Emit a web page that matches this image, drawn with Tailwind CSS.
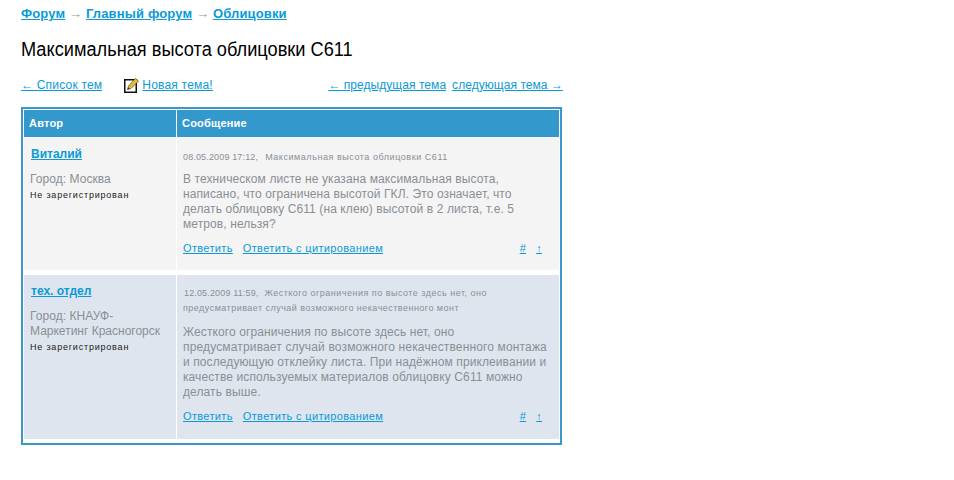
<!DOCTYPE html>
<html><head><meta charset="utf-8"><script src="https://cdn.jsdelivr.net/npm/@tailwindcss/browser@4"></script></head>
<body class="bg-white font-['Liberation_Sans',Arial,sans-serif] text-[#8a8f94]">
<div class="w-[954px] h-[480px] overflow-hidden pl-[21px]">
  <div class="pt-[6px] h-[16px] box-content text-[13px] leading-[16px] font-bold tracking-[0.15px] text-[#999] whitespace-nowrap">
    <a class="text-[#0a9ad6] underline">Форум</a> <span class="font-normal">→</span> <a class="text-[#0a9ad6] underline">Главный форум</a> <span class="font-normal">→</span> <a class="text-[#0a9ad6] underline">Облицовки</a>
  </div>
  <h1 class="mt-[15px] text-[20px] leading-[24px] font-normal text-black whitespace-nowrap origin-left scale-x-[0.91]">Максимальная высота облицовки С611</h1>
  <div class="mt-[14px] w-[542px] h-[20px] flex items-center justify-between text-[12px] text-[#0a9ad6] whitespace-nowrap">
    <div class="flex items-center tracking-[0.2px]">
      <a class="underline">← Список тем</a>
      <svg class="ml-[22px] mr-[3px]" width="15" height="16" viewBox="0 0 15 16"><rect x="0.75" y="2.75" width="11.5" height="12.5" fill="#fff" stroke="#111" stroke-width="1.5"/><path d="M3.5 12.5 L4.5 9 L11.5 1.5 L14.5 4 L7 11.5 Z" fill="#e9bb45" stroke="#6b5213" stroke-width="0.8"/><path d="M3.5 12.5 L4.5 10.5 L5.5 11.8 Z" fill="#222"/></svg>
      <a class="underline">Новая тема!</a>
    </div>
    <div class="flex gap-[6px] tracking-[0.05px]"><a class="underline">← предыдущая тема</a><a class="underline">следующая тема →</a></div>
  </div>
  <div class="mt-[12px] w-[541px] border-2 border-[#3a98cb] pt-px px-px pb-[4px] bg-white">
    <div class="grid grid-cols-[152px_1fr] gap-x-px">
      <div class="h-[27px] bg-[#3399cc] text-white font-bold text-[11px] tracking-[0.2px] leading-[27px] pl-[5px]">Автор</div>
      <div class="h-[27px] bg-[#3399cc] text-white font-bold text-[11px] tracking-[0.2px] leading-[27px] pl-[5px]">Сообщение</div>

      <div class="h-[133px] bg-[#f4f4f5] pl-[7px] pt-[10px]">
        <a class="block text-[12px] leading-[15px] font-bold text-[#0a9ad6] underline">Виталий</a>
        <div class="mt-[10px] -ml-px text-[12px] leading-[15px] tracking-[0.05px]">Город: Москва</div>
        <div class="-ml-px mt-[2px] text-[9px] leading-[12px] tracking-[0.8px] text-[#222]">Не зарегистрирован</div>
      </div>
      <div class="h-[133px] bg-[#f4f4f5] pl-[6px] pr-[6px]">
        <div class="pt-[13px] text-[9px] leading-[14px] whitespace-nowrap"><span class="tracking-[0.15px]">08.05.2009 17:12,</span><span class="ml-[7px] tracking-[0.55px]">Максимальная высота облицовки С611</span></div>
        <div class="mt-[8px] text-[12px] leading-[15px] tracking-[0.1px]">В техническом листе не указана максимальная высота,<br>написано, что ограничена высотой ГКЛ. Это означает, что<br>делать облицовку С611 (на клею) высотой в 2 листа, т.е. 5<br>метров, нельзя?</div>
        <div class="mt-[9px] flex justify-between text-[11px] leading-[14px] tracking-[0.35px] text-[#0a9ad6]">
          <div class="flex gap-[10px]"><a class="underline">Ответить</a><a class="underline">Ответить с цитированием</a></div>
          <div class="flex gap-[10px] pr-[11px]"><a class="underline">#</a><a class="underline">↑</a></div>
        </div>
      </div>

      <div class="h-[5px] col-span-2 bg-white"></div>

      <div class="h-[164px] bg-[#dfe5ef] pl-[7px] pt-[9px]">
        <a class="block text-[12px] leading-[15px] font-bold text-[#0a9ad6] underline">тех. отдел</a>
        <div class="mt-[10px] -ml-px text-[12px] leading-[15px] tracking-[0.05px] w-[145px]">Город: КНАУФ-<br><span class="tracking-normal">Маркетинг Красногорск</span></div>
        <div class="-ml-px mt-[2px] text-[9px] leading-[12px] tracking-[0.8px] text-[#222]">Не зарегистрирован</div>
      </div>
      <div class="h-[164px] bg-[#dfe5ef] pl-[7px] pr-[6px]">
        <div class="pt-[11px] text-[9px] leading-[15px] whitespace-nowrap"><span class="tracking-[0.15px]">12.05.2009 11:59,</span><span class="ml-[6px] tracking-[0.5px]">Жесткого ограничения по высоте здесь нет, оно</span><br><span class="-ml-px tracking-[0.47px]">предусматривает случай возможного некачественного монт</span></div>
        <div class="mt-[9px] -ml-px text-[12px] leading-[15px] tracking-[0.1px] whitespace-nowrap">Жесткого ограничения по высоте здесь нет, оно<br><span class="tracking-[0.15px]">предусматривает случай возможного некачественного монтажа</span><br>и последующую отклейку листа. При надёжном приклеивании и<br>качестве используемых материалов облицовку С611 можно<br>делать выше.</div>
        <div class="mt-[9px] -ml-px flex justify-between text-[11px] leading-[14px] tracking-[0.35px] text-[#0a9ad6]">
          <div class="flex gap-[10px]"><a class="underline">Ответить</a><a class="underline">Ответить с цитированием</a></div>
          <div class="flex gap-[10px] pr-[11px]"><a class="underline">#</a><a class="underline">↑</a></div>
        </div>
      </div>
    </div>
  </div>
</div>
</body></html>
